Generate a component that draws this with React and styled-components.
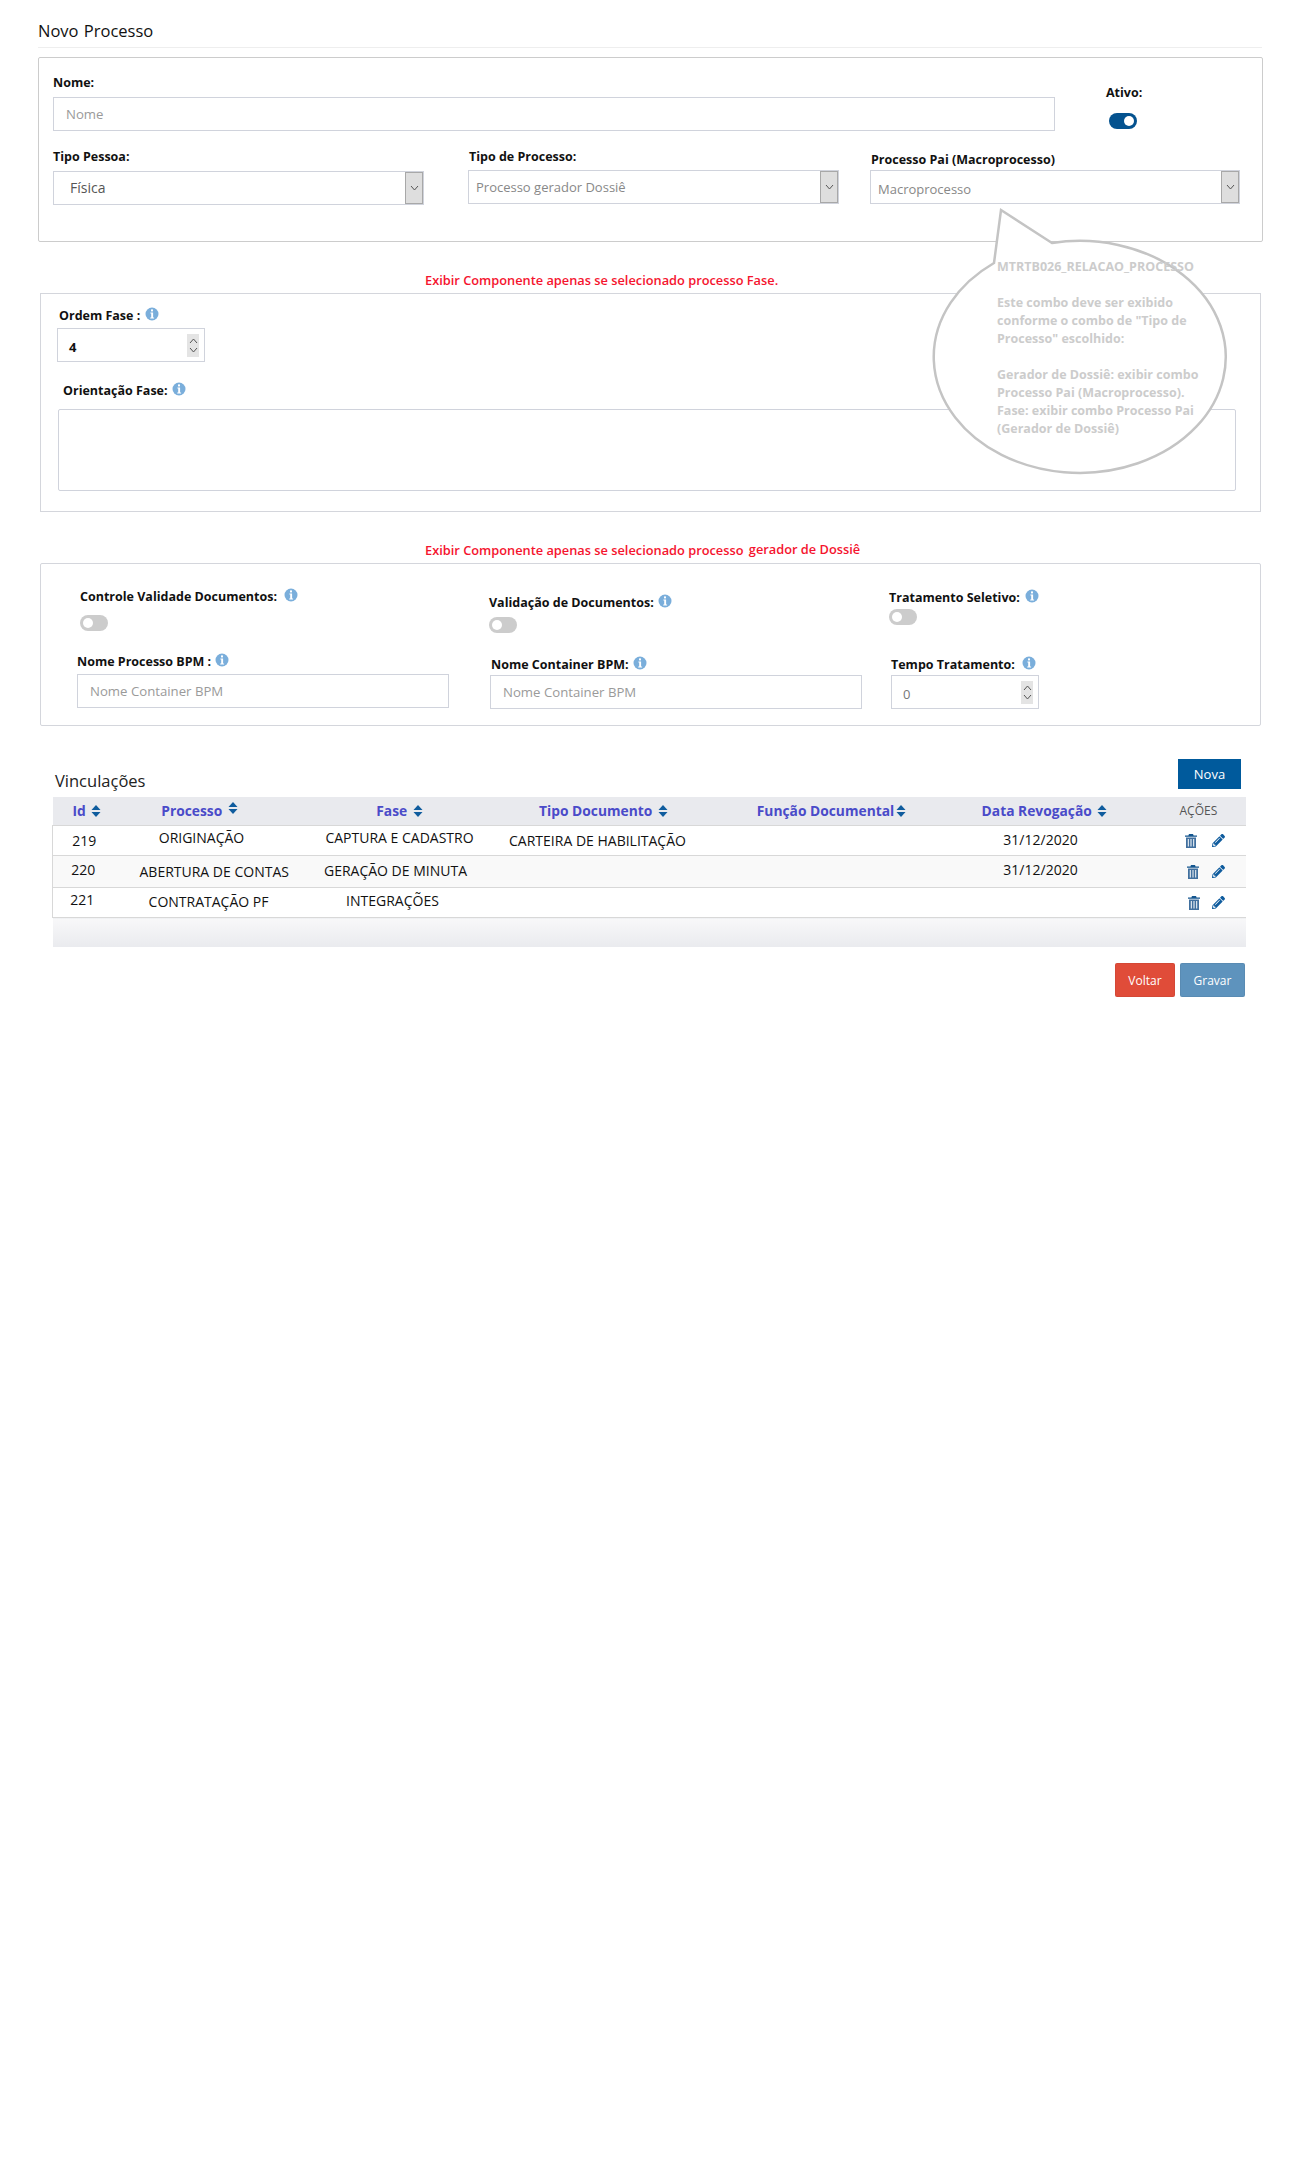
import React from "react";
import styled, { createGlobalStyle } from "styled-components";
import { FaPencilAlt } from "react-icons/fa";

const GlobalStyle = createGlobalStyle`
  html, body {
    margin: 0;
    padding: 0;
    background: #fff;
    font-family: "Open Sans", "Liberation Sans", sans-serif;
    color: #111;
  }
`;

const InfoIcon = () => (
  <InfoSvg viewBox="0 0 14 14">
    <circle cx="7" cy="7" r="6.5" fill="#7aaedb" />
    <rect x="6" y="2.4" width="2" height="2" fill="#fff" />
    <path d="M5.4 5.4h2.7v5h1v1.2H5.2v-1.2h1v-3.8h-.8z" fill="#fff" />
  </InfoSvg>
);

const SortIcon = ({ raised }) => (
  <SortSvg viewBox="0 0 10 12" $raised={raised}>
    <path d="M5 0l4.5 5h-9z" />
    <path d="M5 12l4.5-5h-9z" />
  </SortSvg>
);

const TrashIcon = () => (
  <TrashSvg viewBox="0 0 12 14">
    <path fill="#14568f" d="M4 0h4l.6 1.4H12v1.4H0V1.4h3.4z" />
    <path
      fill="#41709f"
      fillRule="evenodd"
      d="M1 3.6h10V14H1zM2.8 5v7.6h1V5zM5.5 5v7.6h1V5zM8.2 5v7.6h1V5z"
    />
  </TrashSvg>
);

const Chevron = ({ up }) => (
  <svg width="9" height="6" viewBox="0 0 9 6" fill="none" stroke="#555" strokeWidth="1">
    <path d={up ? "M1 5l3.5-4L8 5" : "M1 1l3.5 4L8 1"} />
  </svg>
);

const Select = ({ value, muted, dy }) => (
  <SelectBox>
    <SelectText $muted={muted} $dy={dy}>{value}</SelectText>
    <SelectArrow>
      <Chevron />
    </SelectArrow>
  </SelectBox>
);

const NumberField = ({ value, muted }) => (
  <NumberBox>
    <NumberText $muted={muted}>{value}</NumberText>
    <Spinner>
      <Chevron up />
      <Chevron />
    </Spinner>
  </NumberBox>
);

const rows = [
  {
    id: "219",
    cells: [
      { text: "219", dx: -3 },
      { text: "ORIGINAÇÃO", dx: 2, dy: -3 },
      { text: "CAPTURA E CADASTRO", dx: 12, dy: -3 },
      { text: "CARTEIRA DE HABILITAÇÃO", dx: -6 },
      { text: "" },
      { text: "31/12/2020", dx: -4, dy: -1 },
    ],
    trash: 0,
  },
  {
    id: "220",
    cells: [
      { text: "220", dx: -4, dy: -2 },
      { text: "ABERTURA DE CONTAS", dx: 9 },
      { text: "GERAÇÃO DE MINUTA", dx: 8, dy: -1 },
      { text: "" },
      { text: "" },
      { text: "31/12/2020", dx: -4, dy: -2 },
    ],
    trash: 2,
  },
  {
    id: "221",
    cells: [
      { text: "221", dx: -5, dy: -3 },
      { text: "CONTRATAÇÃO PF", dx: 9, dy: -1 },
      { text: "INTEGRAÇÕES", dx: 5, dy: -2 },
      { text: "" },
      { text: "" },
      { text: "" },
    ],
    trash: 3,
  },
];

const App = () => {
  return (
    <Page>
      <GlobalStyle />
      <PageTitle>Novo Processo</PageTitle>

      <MainCard>
        <TopRow>
          <div>
            <Label>Nome:</Label>
            <Input placeholder="Nome" />
          </div>
          <AtivoBlock>
            <Label $mb={11}>Ativo:</Label>
            <Toggle $on $ml={3} />
          </AtivoBlock>
        </TopRow>
        <SelectRow>
          <div>
            <Label>Tipo Pessoa:</Label>
            <Select value="Física" />
          </div>
          <div>
            <Label $mb={4} $ml={1}>Tipo de Processo:</Label>
            <Select value="Processo gerador Dossiê" muted />
          </div>
          <div>
            <Label $mt={3} $mb={1} $ml={1}>Processo Pai (Macroprocesso)</Label>
            <Select value="Macroprocesso" muted dy={1} />
          </div>
        </SelectRow>
      </MainCard>

      <Notice $top={29} $bottom={4}>Exibir Componente apenas se selecionado processo Fase.</Notice>

      <FaseCard>
        <Label $mb={3} $ml={2} $gap={5}>
          Ordem Fase : <InfoIcon />
        </Label>
        <NumberField value="4" />
        <Label $mt={20} $mb={9} $ml={6}>
          Orientação Fase: <InfoIcon />
        </Label>
        <TextArea />
      </FaseCard>

      <Notice $top={28} $bottom={5}>
        Exibir Componente apenas se selecionado processo <NoticeTail>gerador de Dossiê</NoticeTail>
      </Notice>

      <DossieCard>
        <ToggleRow>
          <ToggleField $left={3}>
            <Label $mb={9} $gap={7}>
              Controle Validade Documentos: <InfoIcon />
            </Label>
            <Toggle />
          </ToggleField>
          <ToggleField $top={6}>
            <Label $mb={5}>
              Validação de Documentos: <InfoIcon />
            </Label>
            <Toggle />
          </ToggleField>
          <ToggleField $top={1}>
            <Label $mb={2} $gap={5}>
              Tratamento Seletivo: <InfoIcon />
            </Label>
            <Toggle />
          </ToggleField>
        </ToggleRow>
        <BpmRow>
          <BpmField>
            <Label $mb={3}>
              Nome Processo BPM : <InfoIcon />
            </Label>
            <Input placeholder="Nome Container BPM" />
          </BpmField>
          <BpmField>
            <Label $mt={3} $mb={1} $ml={1}>
              Nome Container BPM: <InfoIcon />
            </Label>
            <Input placeholder="Nome Container BPM" />
          </BpmField>
          <div>
            <Label $mt={3} $mb={1} $gap={7}>
              Tempo Tratamento: <InfoIcon />
            </Label>
            <NumberField value="0" muted />
          </div>
        </BpmRow>
      </DossieCard>

      <TableHead>
        <SectionTitle>Vinculações</SectionTitle>
        <NovaButton>Nova</NovaButton>
      </TableHead>

      <Table>
        <colgroup>
          <col width="69" />
          <col width="156" />
          <col width="220" />
          <col width="212" />
          <col width="244" />
          <col width="182" />
          <col />
        </colgroup>
        <thead>
          <tr>
            <Th>Id <SortIcon /></Th>
            <Th>Processo <SortIcon raised /></Th>
            <Th $left={24}>Fase <SortIcon /></Th>
            <Th>Tipo Documento <SortIcon /></Th>
            <Th>Função Documental<SortIcon /></Th>
            <Th>Data Revogação <SortIcon /></Th>
            <ThActions>AÇÕES</ThActions>
          </tr>
        </thead>
        <tbody>
          {rows.map((row, i) => (
            <Row key={row.id} $striped={i === 1} $tall={i === 1}>
              {row.cells.map((c, j) => (
                <Td key={j} $dx={c.dx || 0} $dy={c.dy || 0}>
                  {c.text}
                </Td>
              ))}
              <ActionsCell>
                <Actions>
                  <TrashWrap $dx={row.trash}>
                    <TrashIcon />
                  </TrashWrap>
                  <FaPencilAlt size={13} color="#0f5c9e" />
                </Actions>
              </ActionsCell>
            </Row>
          ))}
        </tbody>
        <tfoot>
          <tr>
            <FootCell colSpan="7" />
          </tr>
        </tfoot>
      </Table>

      <Footer>
        <FooterButton $color="#e04c39" $w={60}>Voltar</FooterButton>
        <FooterButton $color="#5e93bd" $w={65}>Gravar</FooterButton>
      </Footer>

      <Balloon>
        <BalloonShape viewBox="0 0 300 270">
          <path
            d="M65 2 L116 35 A146 116 0 1 1 58 55 Z"
            fill="#fff"
            stroke="#c4c4c4"
            strokeWidth="2.5"
          />
        </BalloonShape>
        <BalloonText>
          MTRTB026_RELACAO_PROCESSO
          <br />
          <br />
          Este combo deve ser exibido
          <br />
          conforme o combo de "Tipo de
          <br />
          Processo" escolhido:
          <br />
          <br />
          Gerador de Dossiê: exibir combo
          <br />
          Processo Pai (Macroprocesso).
          <br />
          Fase: exibir combo Processo Pai
          <br />
          (Gerador de Dossiê)
        </BalloonText>
      </Balloon>
    </Page>
  );
};

export default App;

const Page = styled.div`
  position: relative;
  width: 1312px;
  height: 2164px;
  box-sizing: border-box;
  padding-top: 20px;
  overflow: hidden;
`;

const PageTitle = styled.h1`
  margin: 0 0 9px 38px;
  width: 1224px;
  height: 28px;
  box-sizing: border-box;
  border-bottom: 1px solid #eeeeee;
  font-size: 16.5px;
  line-height: 22px;
  font-weight: 400;
  word-spacing: 1px;
  color: #111;
`;

const MainCard = styled.section`
  width: 1225px;
  height: 185px;
  margin-left: 38px;
  box-sizing: border-box;
  border: 1px solid #cccccc;
  border-radius: 2px;
  padding: 16px 21px 0 14px;
`;

const TopRow = styled.div`
  display: grid;
  grid-template-columns: 1002px 1fr;
  column-gap: 51px;
`;

const AtivoBlock = styled.div`
  padding-top: 10px;
`;

const SelectRow = styled.div`
  display: grid;
  grid-template-columns: 415px 402px 370px;
  margin-top: 17px;

  & > div:first-child,
  & > div:nth-child(2) {
    width: 371px;
  }
`;

const Label = styled.label`
  display: flex;
  align-items: center;
  gap: ${(p) => p.$gap || 4}px;
  height: 18px;
  margin: ${(p) => p.$mt || 0}px 0 ${(p) => (p.$mb === undefined ? 5 : p.$mb)}px ${(p) => p.$ml || 0}px;
  font-size: 12.5px;
  line-height: 18px;
  font-weight: 700;
  color: #111;
  white-space: nowrap;
`;

const InfoSvg = styled.svg`
  width: 14px;
  height: 14px;
  flex: none;
  margin-bottom: 5px;
`;

const SortSvg = styled.svg`
  display: inline-block;
  width: 10px;
  height: 12px;
  margin-left: 2px;
  vertical-align: ${(p) => (p.$raised ? "2px" : "-1px")};
  fill: #0f5c9e;
`;

const TrashSvg = styled.svg`
  display: block;
  width: 12px;
  height: 14px;
`;

const Input = styled.input`
  display: block;
  width: 100%;
  height: 34px;
  box-sizing: border-box;
  border: 1px solid #d0d3dc;
  border-radius: 0;
  padding: 0 12px;
  background: #fff;
  font-family: inherit;
  font-size: 13.2px;
  outline: none;

  &::placeholder {
    color: #9a9a9a;
    opacity: 1;
  }
`;

const SelectBox = styled.div`
  display: flex;
  align-items: stretch;
  height: 34px;
  box-sizing: border-box;
  border: 1px solid #d0d3dc;
  background: #fff;
`;

const SelectText = styled.span`
  flex: 1;
  padding: ${(p) => (p.$dy ? "2px" : "0")} 0 0 ${(p) => (p.$muted ? "7px" : "16px")};
  font-size: ${(p) => (p.$muted ? "13px" : "14px")};
  line-height: 32px;
  color: ${(p) => (p.$muted ? "#888888" : "#555555")};
`;

const SelectArrow = styled.span`
  display: flex;
  align-items: center;
  justify-content: center;
  width: 16px;
  border: 1px solid #a8a8a8;
  background: #dedede;
`;

const Notice = styled.p`
  margin: ${(p) => p.$top}px 0 ${(p) => p.$bottom}px;
  height: 18px;
  padding-left: 425px;
  font-size: 12.8px;
  line-height: 18px;
  font-weight: 600;
  color: #f5142e;
`;

const NoticeTail = styled.span`
  margin-left: 2px;
  vertical-align: 1px;
`;

const FaseCard = styled.section`
  width: 1221px;
  height: 219px;
  margin-left: 40px;
  box-sizing: border-box;
  border: 1px solid #d4d6dc;
  padding: 13px 24px 0 16px;
`;

const NumberBox = styled.div`
  display: flex;
  align-items: center;
  justify-content: space-between;
  width: 148px;
  height: 34px;
  box-sizing: border-box;
  border: 1px solid #d0d3dc;
  padding: 0 5px 0 11px;
`;

const NumberText = styled.span`
  padding-top: 3px;
  font-size: 13px;
  font-weight: ${(p) => (p.$muted ? 400 : 700)};
  color: ${(p) => (p.$muted ? "#777777" : "#111111")};
`;

const Spinner = styled.span`
  display: flex;
  flex-direction: column;
  align-items: center;
  justify-content: center;
  gap: 3px;
  width: 12px;
  height: 23px;
  background: #e4e4e4;
`;

const TextArea = styled.div`
  height: 82px;
  margin-left: 1px;
  box-sizing: border-box;
  border: 1px solid #d0d3dc;
  border-radius: 2px;
`;

const DossieCard = styled.section`
  width: 1221px;
  height: 163px;
  margin-left: 40px;
  box-sizing: border-box;
  border: 1px solid #d4d6dc;
  border-radius: 2px;
  padding: 24px 0 0 36px;
`;

const ToggleRow = styled.div`
  display: grid;
  grid-template-columns: 412px 400px 1fr;
  height: 65px;
`;

const ToggleField = styled.div`
  padding: ${(p) => p.$top || 0}px 0 0 ${(p) => p.$left || 0}px;
`;

const BpmRow = styled.div`
  display: grid;
  grid-template-columns: 413px 401px 148px;
`;

const BpmField = styled.div`
  width: 372px;
`;

const Toggle = styled.span`
  position: relative;
  display: block;
  width: 28px;
  height: 16px;
  margin-left: ${(p) => p.$ml || 0}px;
  border-radius: 8px;
  background: ${(p) => (p.$on ? "#04528f" : "#cccccc")};

  &::after {
    content: "";
    position: absolute;
    top: 3px;
    left: ${(p) => (p.$on ? "15px" : "3px")};
    width: 10px;
    height: 10px;
    border-radius: 50%;
    background: #fff;
  }
`;

const TableHead = styled.div`
  display: flex;
  align-items: flex-end;
  justify-content: space-between;
  width: 1186px;
  height: 30px;
  margin: 33px 0 8px 55px;
`;

const SectionTitle = styled.h2`
  margin: 0 0 -3px;
  font-size: 16.5px;
  line-height: 22px;
  font-weight: 400;
  color: #222;
`;

const NovaButton = styled.button`
  width: 63px;
  height: 30px;
  border: 0;
  background: #005a9c;
  color: #fff;
  font-family: inherit;
  font-size: 13px;
`;

const Table = styled.table`
  width: 1194px;
  margin-left: 52px;
  table-layout: fixed;
  border-collapse: collapse;
  font-size: 14px;
`;

const Th = styled.th`
  height: 26px;
  padding: 0 0 2px ${(p) => p.$left || 0}px;
  background: #e9eaee;
  font-size: 13.8px;
  font-weight: 700;
  text-align: center;
  color: #4a4bc9;
  white-space: nowrap;
`;

const ThActions = styled(Th)`
  padding-left: 44px;
  font-size: 12px;
  font-weight: 400;
  text-align: left;
  color: #555555;
`;

const Row = styled.tr`
  height: ${(p) => (p.$tall ? "32px" : "30px")};
  background: ${(p) => (p.$striped ? "#f9f9f9" : "#ffffff")};
  border-top: 1px solid #d8d8d8;
  border-bottom: 1px solid #d8d8d8;
`;

const Td = styled.td`
  padding: ${(p) => (p.$dy > 0 ? p.$dy * 2 : 0)}px ${(p) => (p.$dx < 0 ? -p.$dx * 2 : 0)}px
    ${(p) => (p.$dy < 0 ? -p.$dy * 2 : 0)}px ${(p) => (p.$dx > 0 ? p.$dx * 2 : 0)}px;
  text-align: center;
  font-size: 14px;
  color: #111;
  white-space: nowrap;

  &:first-child {
    border-left: 1px solid #d8d8d8;
  }
`;

const ActionsCell = styled.td`
  padding: 0;
`;

const Actions = styled.div`
  display: flex;
  align-items: center;
  padding-left: 49px;
`;

const TrashWrap = styled.span`
  width: 27px;
  padding-left: ${(p) => p.$dx}px;
  box-sizing: border-box;
`;

const FootCell = styled.td`
  height: 29px;
  padding: 0;
  background: linear-gradient(#f8f8f9, #e9eaee);
`;

const Footer = styled.div`
  display: flex;
  justify-content: flex-end;
  gap: 5px;
  width: 1245px;
  margin-top: 16px;
`;

const FooterButton = styled.button`
  width: ${(p) => p.$w}px;
  height: 34px;
  border: 1px solid rgba(0, 0, 0, 0.05);
  border-radius: 2px;
  background: ${(p) => p.$color};
  color: #fff;
  font-family: inherit;
  font-size: 12px;
`;

const Balloon = styled.aside`
  position: absolute;
  left: 936px;
  top: 208px;
  width: 300px;
  height: 270px;
`;

const BalloonShape = styled.svg`
  position: absolute;
  inset: 0;
  width: 300px;
  height: 270px;
  overflow: visible;
`;

const BalloonText = styled.div`
  position: absolute;
  left: 61px;
  top: 50px;
  width: 230px;
  font-size: 12.5px;
  line-height: 18px;
  font-weight: 700;
  color: #cccccc;
  white-space: nowrap;
`;
